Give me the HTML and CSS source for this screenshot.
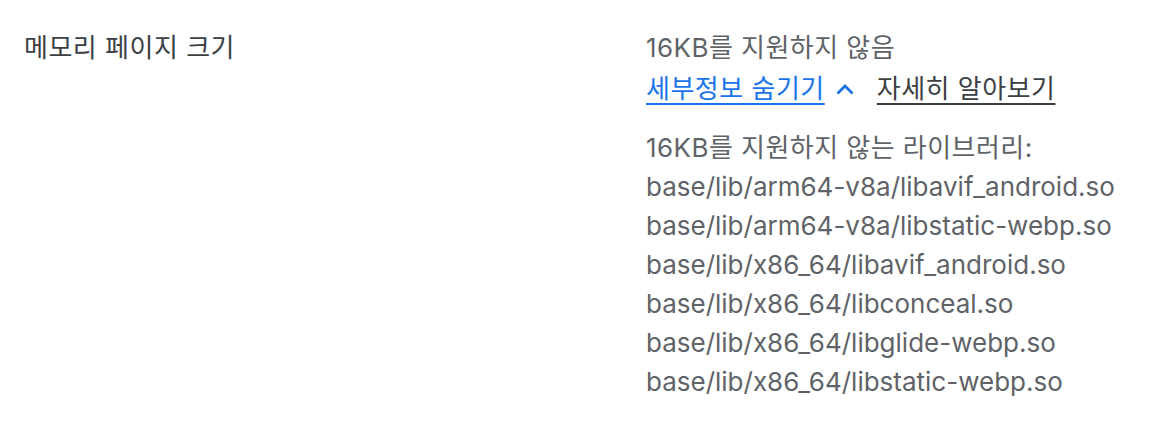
FILE: index.html
```html
<!DOCTYPE html>
<html lang="ko">
<head>
<meta charset="utf-8">
<link rel="stylesheet" href="styles.css">
</head>
<body>
<div class="row">
  <div class="label">메모리 페이지 크기</div>
  <div class="value">
    <div class="status">16KB를 지원하지 않음</div>
    <div class="links">
      <a class="toggle" href="#"><span class="toggle-text">세부정보 숨기기</span><svg class="chev" width="20" height="20" viewBox="0 0 20 20"><path d="M2.5 14.5 L10 7 L17.5 14.5" fill="none" stroke="currentColor" stroke-width="2.8"/></svg></a>
      <a class="learn" href="#">자세히 알아보기</a>
    </div>
    <div class="libs">
      <div class="libs-title">16KB를 지원하지 않는 라이브러리:</div>
      <div>base/lib/arm64-v8a/libavif_android.so</div>
      <div>base/lib/arm64-v8a/libstatic-webp.so</div>
      <div>base/lib/x86_64/libavif_android.so</div>
      <div>base/lib/x86_64/libconceal.so</div>
      <div>base/lib/x86_64/libglide-webp.so</div>
      <div>base/lib/x86_64/libstatic-webp.so</div>
    </div>
  </div>
</div>
</body>
</html>
```

FILE: styles.css
```css
html, body {
  margin: 0;
  padding: 0;
  background: #ffffff;
}
body {
  font-family: Inter, "Noto Sans CJK KR", sans-serif;
  font-size: 26px;
  line-height: 39px;
  color: #5f6368;
}
.row {
  display: flex;
  padding: 28px 24px 0 24px;
}
.label {
  width: 622px;
  flex: none;
  color: #3c4043;
  letter-spacing: 0.5px;
}
.value {
  flex: 1;
}
.status,
.libs-title {
  letter-spacing: 0.45px;
}
.links {
  margin-top: 2px;
  display: flex;
  align-items: center;
  letter-spacing: 0.5px;
}
.toggle {
  color: #1a73e8;
  text-decoration: none;
  display: inline-flex;
  align-items: center;
}
.toggle-text {
  text-decoration: underline;
  text-underline-offset: 5px;
  text-decoration-thickness: 2px;
}
.chev {
  margin-left: 10px;
  display: block;
}
.learn {
  margin-left: 22px;
  color: #3c4043;
  text-decoration: underline;
  text-underline-offset: 5px;
  text-decoration-thickness: 2px;
}
.libs {
  margin-top: 20px;
}
```
